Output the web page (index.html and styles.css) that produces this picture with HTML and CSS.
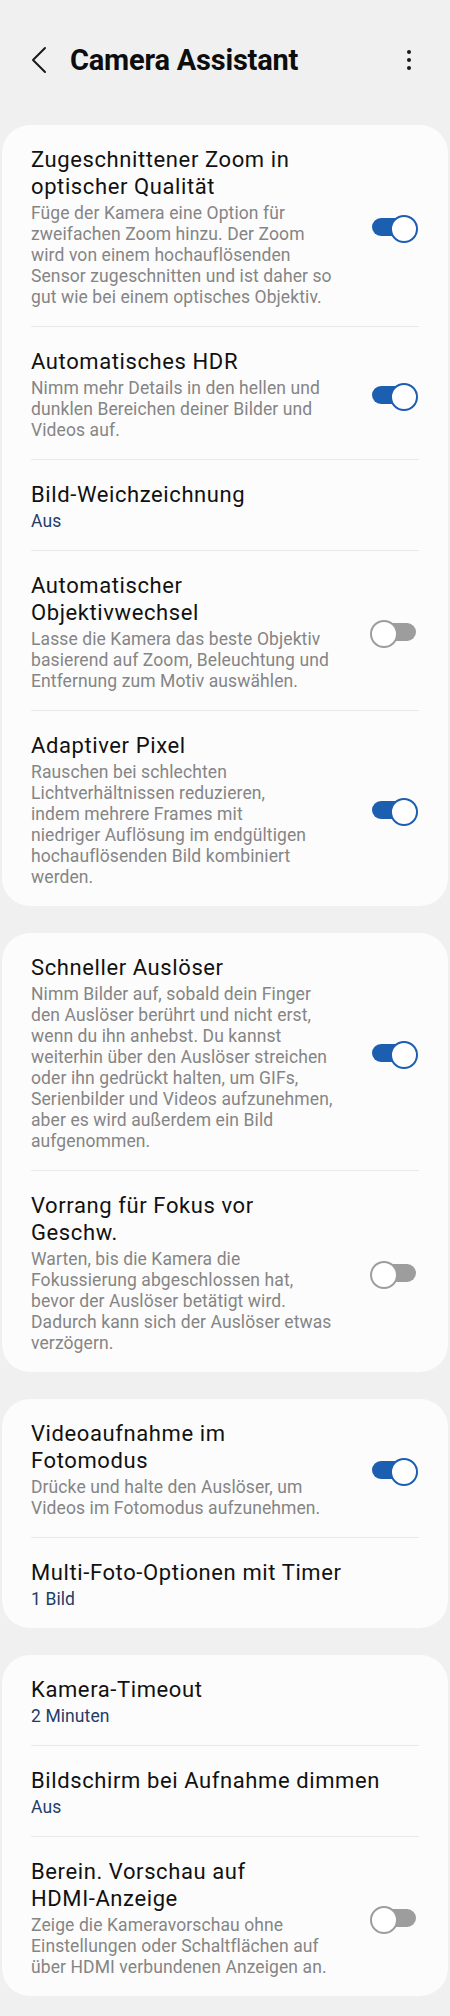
FILE: index.html
```html
<!DOCTYPE html>
<html lang="de">
<head>
  <meta charset="UTF-8">
  <meta name="viewport" content="width=450">
  <title>Camera Assistant</title>
  <link rel="stylesheet" href="styles.css">
</head>
<body>
  <div class="page">
    <header class="topbar">
      <svg class="back" width="20" height="28" viewBox="0 0 20 28">
        <polyline points="16,2 4,14 16,26" fill="none" stroke="#1a1a1a" stroke-width="2" stroke-linecap="round" stroke-linejoin="round"/>
      </svg>
      <h1 class="title">Camera Assistant</h1>
      <div class="more">
        <span></span><span></span><span></span>
      </div>
    </header>

    <!-- Gruppe 1 -->
    <section class="card">
      <div class="row">
        <div class="text">
          <div class="label">Zugeschnittener Zoom in<br>optischer Qualität</div>
          <div class="desc">Füge der Kamera eine Option für<br>zweifachen Zoom hinzu. Der Zoom<br>wird von einem hochauflösenden<br>Sensor zugeschnitten und ist daher so<br>gut wie bei einem optisches Objektiv.</div>
        </div>
        <span class="switch on"></span>
      </div>
      <div class="row">
        <div class="text">
          <div class="label">Automatisches HDR</div>
          <div class="desc">Nimm mehr Details in den hellen und<br>dunklen Bereichen deiner Bilder und<br>Videos auf.</div>
        </div>
        <span class="switch on"></span>
      </div>
      <div class="row">
        <div class="text">
          <div class="label">Bild-Weichzeichnung</div>
          <div class="value">Aus</div>
        </div>
      </div>
      <div class="row">
        <div class="text">
          <div class="label">Automatischer<br>Objektivwechsel</div>
          <div class="desc">Lasse die Kamera das beste Objektiv<br>basierend auf Zoom, Beleuchtung und<br>Entfernung zum Motiv auswählen.</div>
        </div>
        <span class="switch"></span>
      </div>
      <div class="row">
        <div class="text">
          <div class="label">Adaptiver Pixel</div>
          <div class="desc">Rauschen bei schlechten<br>Lichtverhältnissen reduzieren,<br>indem mehrere Frames mit<br>niedriger Auflösung im endgültigen<br>hochauflösenden Bild kombiniert<br>werden.</div>
        </div>
        <span class="switch on"></span>
      </div>
    </section>

    <!-- Gruppe 2 -->
    <section class="card">
      <div class="row">
        <div class="text">
          <div class="label">Schneller Auslöser</div>
          <div class="desc">Nimm Bilder auf, sobald dein Finger<br>den Auslöser berührt und nicht erst,<br>wenn du ihn anhebst. Du kannst<br>weiterhin über den Auslöser streichen<br>oder ihn gedrückt halten, um GIFs,<br>Serienbilder und Videos aufzunehmen,<br>aber es wird außerdem ein Bild<br>aufgenommen.</div>
        </div>
        <span class="switch on"></span>
      </div>
      <div class="row">
        <div class="text">
          <div class="label">Vorrang für Fokus vor<br>Geschw.</div>
          <div class="desc">Warten, bis die Kamera die<br>Fokussierung abgeschlossen hat,<br>bevor der Auslöser betätigt wird.<br>Dadurch kann sich der Auslöser etwas<br>verzögern.</div>
        </div>
        <span class="switch"></span>
      </div>
    </section>

    <!-- Gruppe 3 -->
    <section class="card">
      <div class="row">
        <div class="text">
          <div class="label">Videoaufnahme im<br>Fotomodus</div>
          <div class="desc">Drücke und halte den Auslöser, um<br>Videos im Fotomodus aufzunehmen.</div>
        </div>
        <span class="switch on"></span>
      </div>
      <div class="row">
        <div class="text">
          <div class="label">Multi-Foto-Optionen mit Timer</div>
          <div class="value">1 Bild</div>
        </div>
      </div>
    </section>

    <!-- Gruppe 4 -->
    <section class="card">
      <div class="row">
        <div class="text">
          <div class="label">Kamera-Timeout</div>
          <div class="value">2 Minuten</div>
        </div>
      </div>
      <div class="row">
        <div class="text">
          <div class="label">Bildschirm bei Aufnahme dimmen</div>
          <div class="value">Aus</div>
        </div>
      </div>
      <div class="row">
        <div class="text">
          <div class="label">Berein. Vorschau auf<br>HDMI-Anzeige</div>
          <div class="desc">Zeige die Kameravorschau ohne<br>Einstellungen oder Schaltflächen auf<br>über HDMI verbundenen Anzeigen an.</div>
        </div>
        <span class="switch"></span>
      </div>
    </section>
  </div>
</body>
</html>
```

FILE: styles.css
```css
* {
  margin: 0;
  padding: 0;
  box-sizing: border-box;
}

html, body {
  width: 450px;
  background: #f0f0f0;
  font-family: Roboto, 'Noto Sans', sans-serif;
  color: #111;
}

.page {
  display: flex;
  flex-direction: column;
  gap: 27px;
  padding-bottom: 26px;
}

.topbar {
  height: 120px;
  margin-bottom: -22px;
  display: flex;
  align-items: center;
  padding-left: 29px;
}

.back {
  display: block;
}

.title {
  margin-left: 21px;
  font-size: 29px;
  font-weight: bold;
  letter-spacing: -0.2px;
  color: #0d0d0d;
}

.more {
  margin-left: auto;
  margin-right: 39px;
  display: flex;
  flex-direction: column;
  gap: 4px;
}

.more span {
  width: 4px;
  height: 4px;
  border-radius: 50%;
  background: #1a1a1a;
}

.card {
  margin: 0 2px;
  background: #fcfcfc;
  border-radius: 28px;
  padding: 0 29px;
}

.row {
  display: flex;
  align-items: center;
  padding: 21px 3px 18px 0;
  border-top: 1px solid #e9e9e9;
}

.row:first-child {
  border-top: none;
}

.text {
  flex: 1;
  min-width: 0;
  white-space: nowrap;
}

.label {
  font-size: 22px;
  line-height: 27px;
  letter-spacing: 0.6px;
  color: #111;
}

.desc {
  margin-top: 3px;
  font-size: 17.5px;
  line-height: 21px;
  letter-spacing: 0.1px;
  color: #858585;
}

.value {
  margin-top: 3px;
  font-size: 17.5px;
  line-height: 21px;
  letter-spacing: 0.1px;
  color: #1f3d69;
}

/* Schalter */
.switch {
  position: relative;
  flex: none;
  width: 44px;
  height: 18px;
  margin-left: 30px;
  border-radius: 9px;
  background: #9d9d9d;
}

.switch::after {
  content: '';
  position: absolute;
  top: -3px;
  left: -2px;
  width: 24px;
  height: 24px;
  border-radius: 50%;
  background: #fff;
  border: 2px solid #9d9d9d;
}

.switch.on {
  background: #1c5eb0;
}

.switch.on::after {
  left: auto;
  right: -2px;
  border-color: #1c5eb0;
}
```
